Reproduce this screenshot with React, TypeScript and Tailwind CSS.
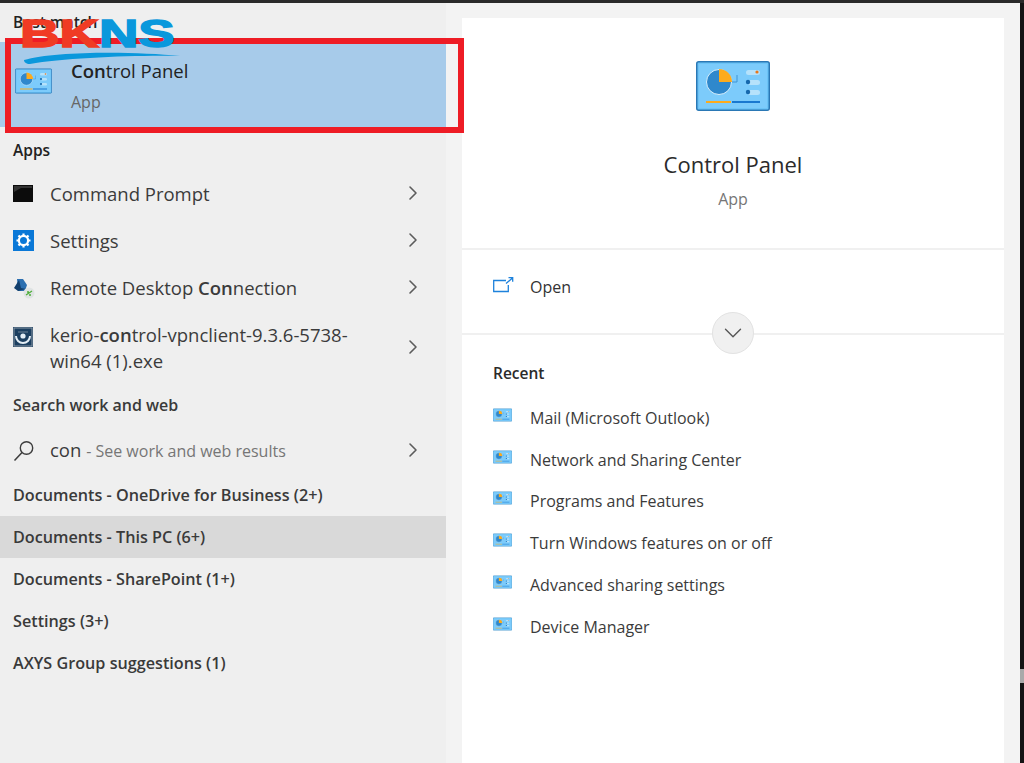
import React from 'react';
import { ChevronRight, ChevronDown } from 'lucide-react';

const CpIcon = ({ className }: { className: string }) => (
  <svg viewBox="0 0 74 50" className={className}>
    <rect x="0.75" y="0.75" width="72.5" height="48.5" rx="2" fill="#6cc4f7" stroke="#2a78b5" strokeWidth="1.5" />
    <rect x="3" y="3" width="68" height="44" fill="#7ccbfb" />
    <circle cx="23" cy="21" r="12.5" fill="#2f88cc" stroke="#d8effc" strokeWidth="1" />
    <path d="M23 8 A13 13 0 0 1 36 21 L23 21 Z" fill="#fdab1d" />
    <path d="M41 14 V21 H36" fill="none" stroke="#3f95d6" strokeWidth="1" />
    <rect x="50" y="9" width="14" height="5" rx="2.5" fill="#b6e2fb" />
    <circle cx="61" cy="11" r="1.6" fill="#e8771b" />
    <rect x="52" y="19" width="12" height="5" rx="2.5" fill="#b6e2fb" />
    <circle cx="52" cy="21" r="2.2" fill="#1668ad" />
    <rect x="52" y="29" width="12" height="5" rx="2.5" fill="#b6e2fb" />
    <circle cx="52" cy="31" r="2.2" fill="#1668ad" />
    <rect x="10" y="40" width="25" height="2" fill="#fdab1d" />
    <rect x="36" y="40" width="28" height="2" fill="#1a78cf" />
  </svg>
);

const CommandIcon = () => (
  <svg viewBox="0 0 20 17" className="w-5 h-[17px]">
    <rect width="20" height="17" fill="#0c0c0c" />
    <path d="M1 1h18v2H8L1 7z" fill="#333" />
  </svg>
);

const SettingsIcon = () => (
  <svg viewBox="0 0 21 21" className="w-[21px] h-[21px]">
    <rect width="21" height="21" fill="#0a78d7" />
    <circle cx="10.5" cy="10.5" r="4.6" fill="none" stroke="#fff" strokeWidth="2.2" />
    <path d="M10.5 3.5v2.6M10.5 14.9v2.6M3.5 10.5h2.6M14.9 10.5h2.6M5.5 5.5l1.9 1.9M13.6 13.6l1.9 1.9M15.5 5.5l-1.9 1.9M7.4 13.6l-1.9 1.9" stroke="#fff" strokeWidth="2.2" />
  </svg>
);

const RemoteIcon = () => (
  <svg viewBox="0 0 22 22" className="w-[22px] h-[22px]">
    <path d="M4 2h6l4 6-2 6H5z" fill="#2c6fb0" />
    <path d="M1 11l5-8 2 8 5 1-8 2z" fill="#123f6d" />
    <circle cx="16" cy="16" r="5.5" fill="#dfe3e3" />
    <path d="M13 18l6-4M14 15h2M16 18h2" stroke="#4fae3a" strokeWidth="1.3" />
  </svg>
);

const KerioIcon = () => (
  <svg viewBox="0 0 20 20" className="w-5 h-5">
    <rect width="20" height="20" fill="#1c3f60" />
    <rect x="1" y="1" width="18" height="18" fill="none" stroke="#8a99a6" strokeWidth="1" />
    <path d="M3 9a7 7 0 0 0 14 0" fill="none" stroke="#e4eef5" strokeWidth="2" />
    <circle cx="10" cy="9" r="2.6" fill="#e4eef5" />
    <path d="M5 5h10" stroke="#6f8496" strokeWidth="1" />
  </svg>
);

const SearchIcon = () => (
  <svg viewBox="0 0 22 22" className="w-[22px] h-[22px]" fill="none" stroke="#3d3d3d" strokeWidth="1.4">
    <circle cx="13.5" cy="8" r="6.2" />
    <path d="M9 12.5L1.5 20.5" strokeWidth="1.6" />
  </svg>
);

const OpenIcon = () => (
  <svg viewBox="0 0 21 16" className="w-[21px] h-4" fill="none" stroke="#1e82dc" strokeWidth="1.3">
    <path d="M13 3.5H.7v11h14.6V8" />
    <path d="M13 6.5L19.5 1M15.5 .7h4.2v4" />
  </svg>
);

const Row = ({ icon, children, h = 'h-[47px]' }: { icon: React.ReactNode; children: React.ReactNode; h?: string }) => (
  <div className={`flex items-center ${h} pl-[13px] pr-[21px]`}>
    <div className="w-[37px] shrink-0 flex items-center">{icon}</div>
    <div className="flex-1 text-[18.5px] leading-[26px] text-[#3b3b3b]">{children}</div>
    <ChevronRight size={24} strokeWidth={1.6} className="text-[#5c5c5c] mt-[-2px]" />
  </div>
);

const Group = ({ label, active }: { label: string; active?: boolean }) => (
  <div className={`h-[42px] flex items-center pl-[13px] text-[16.2px] font-semibold text-[#3a3a3a] ${active ? 'bg-[#d9d9d9]' : ''}`}>{label}</div>
);

const recent = [
  'Mail (Microsoft Outlook)',
  'Network and Sharing Center',
  'Programs and Features',
  'Turn Windows features on or off',
  'Advanced sharing settings',
  'Device Manager',
];

export default function App() {
  return (
    <div className="relative w-[1024px] h-[763px] overflow-hidden flex flex-col bg-[#f3f3f3] font-['Open_Sans','Noto_Sans',sans-serif]">
      <div className="h-[3px] bg-[#2a2a2a] shrink-0" />
      <div className="flex flex-1 min-h-0">
        {/* left results list */}
        <div className="w-[446px] shrink-0 bg-[#efefef] flex flex-col">
          <div className="h-[39px] flex items-center pl-[13px] text-[15.5px] font-semibold text-[#222]">Best match</div>
          <div className="h-[85px] bg-[#a7cbea] flex items-center pl-[15px]">
            <CpIcon className="w-[37px] h-[26px] mr-[19px] mt-[-8px]" />
            <div className="flex flex-col gap-[7px] mt-[3px]">
              <span className="text-[18.5px] leading-6 text-[#222]"><b className="font-semibold">Con</b>trol Panel</span>
              <span className="text-[16px] leading-6 text-[#666]">App</span>
            </div>
          </div>
          <div className="h-[43px] flex items-center pt-[5px] pl-[13px] text-[15.5px] font-semibold text-[#222]">Apps</div>
          <Row icon={<CommandIcon />}>Command Prompt</Row>
          <Row icon={<SettingsIcon />}>Settings</Row>
          <Row icon={<RemoteIcon />}>Remote Desktop <b className="font-semibold">Con</b>nection</Row>
          <Row h="h-[73px]" icon={<div className="mt-[-22px]"><KerioIcon /></div>}>
            kerio-<b className="font-semibold">con</b>trol-vpnclient-9.3.6-5738-<br />win64 (1).exe
          </Row>
          <div className="h-[43px] flex items-center pb-[2px] pl-[13px] text-[16px] font-semibold text-[#3a3a3a]">Search work and web</div>
          <Row icon={<SearchIcon />}>
            con <span className="text-[16px] text-[#767676]">- See work and web results</span>
          </Row>
          <Group label="Documents - OneDrive for Business (2+)" />
          <Group label="Documents - This PC (6+)" active />
          <Group label="Documents - SharePoint (1+)" />
          <Group label="Settings (3+)" />
          <Group label="AXYS Group suggestions (1)" />
        </div>

        {/* right detail pane */}
        <div className="w-[542px] ml-[16px] mt-[15px] bg-white flex flex-col shrink-0">
          <div className="h-[232px] flex flex-col items-center border-b-2 border-[#f0f0f0]">
            <CpIcon className="w-[74px] h-[50px] mt-[43px]" />
            <div className="mt-[37px] text-[22px] leading-8 text-[#2b2b2b]">Control Panel</div>
            <div className="mt-[7px] text-[16px] leading-6 text-[#767676]">App</div>
          </div>
          <div className="h-[85px] relative border-b-2 border-[#f0f0f0] flex items-center pl-[31px] pb-[10px]">
            <div className="w-[37px] mt-[-4px]"><OpenIcon /></div>
            <span className="text-[16px] text-[#333]">Open</span>
            <div className="absolute left-[250px] top-[62px] w-[42px] h-[42px] rounded-full bg-[#f0f0f0] border border-[#e2e2e2] flex items-center justify-center">
              <ChevronDown size={30} strokeWidth={1.1} className="text-[#555]" />
            </div>
          </div>
          <div className="pl-[31px] pt-[26px]">
            <div className="text-[15.5px] leading-6 font-semibold text-[#2b2b2b] mb-[12px]">Recent</div>
            {recent.map((r) => (
              <div key={r} className="h-[41.8px] flex items-center">
                <div className="w-[37px] mt-[-6px]"><CpIcon className="w-[19px] h-[14px]" /></div>
                <span className="text-[16px] text-[#3b3b3b]">{r}</span>
              </div>
            ))}
          </div>
        </div>

        <div className="ml-[16px] w-[4px] bg-[#141414] shrink-0 relative">
          <div className="absolute left-0 top-[666px] w-full h-[14px] bg-[#a9a9a9]" />
        </div>
      </div>

      {/* annotation overlaid on the screenshot */}
      <div className="absolute left-[5px] top-[38px] w-[459px] h-[95px] border-[6px] border-[#ee1c25]" />
      <div className="absolute left-[20px] top-[14px] w-[160px] h-[50px]">
        <div className="font-['Liberation_Sans',sans-serif] font-bold text-[39px] leading-[40px] origin-left scale-x-[1.4] whitespace-nowrap">
          <span className="text-[#f03b24] [-webkit-text-stroke:1.5px_#f03b24]">BK</span><span className="text-[#0a98dc] [-webkit-text-stroke:1.5px_#0a98dc]">NS</span>
        </div>
        <svg viewBox="0 0 156 12" className="absolute left-[4px] top-[38px] w-[156px] h-3">
          <path d="M0 8 C30 -1 110 -1 156 4 C110 3 40 6 6 12 C2 12 0 10 0 8Z" fill="#0a98dc" />
        </svg>
      </div>
    </div>
  );
}
